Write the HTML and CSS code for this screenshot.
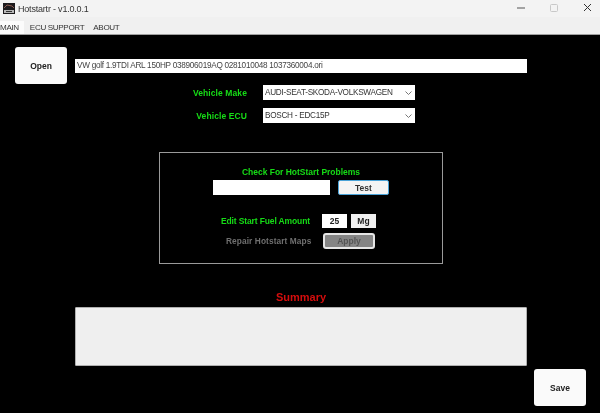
FILE: index.html
```html
<!DOCTYPE html>
<html lang="en">
<head>
<meta charset="utf-8">
<title>Hotstartr</title>
<link rel="stylesheet" href="styles.css">
</head>
<body>
<div class="window">
  <header class="titlebar">
    <svg class="app-icon" width="12" height="11" viewBox="0 0 12 11"><rect width="12" height="11" fill="#1c1a1c"/><path d="M1 5 L4 2 L9 3 L11 5" fill="none" stroke="#8a5a50" stroke-width="1"/><rect x="1" y="7" width="10" height="3" fill="#b8b8b8"/><rect x="3" y="8" width="6" height="1" fill="#333"/></svg>
    <span class="app-title">Hotstartr - v1.0.0.1</span>
    <div class="controls">
      <svg width="8" height="2" viewBox="0 0 8 2"><rect width="8" height="1" y="0.5" fill="#555"/></svg>
      <svg width="8" height="8" viewBox="0 0 8 8"><rect x="0.5" y="0.5" width="7" height="7" rx="1" fill="none" stroke="#c8c8c8"/></svg>
      <svg width="9" height="9" viewBox="0 0 9 9"><path d="M1 1 L8 8 M8 1 L1 8" stroke="#333" stroke-width="1" fill="none"/></svg>
    </div>
  </header>
  <nav class="tabs">
    <span class="tab tab-active">MAIN</span>
    <span class="tab">ECU SUPPORT</span>
    <span class="tab">ABOUT</span>
  </nav>
  <main class="content">
    <div class="file-row">
      <button class="big-btn">Open</button>
      <div class="field file-field">VW golf 1.9TDI ARL 150HP 038906019AQ 0281010048 1037360004.ori</div>
    </div>
    <div class="select-row row-make">
      <label class="green label-cell">Vehicle Make</label>
      <div class="field select">AUDI-SEAT-SKODA-VOLKSWAGEN<svg class="chev" width="7" height="4" viewBox="0 0 7 4"><path d="M0.5 0.5 L3.5 3.5 L6.5 0.5" fill="none" stroke="#777"/></svg></div>
    </div>
    <div class="select-row row-ecu">
      <label class="green label-cell">Vehicle ECU</label>
      <div class="field select">BOSCH - EDC15P<svg class="chev" width="7" height="4" viewBox="0 0 7 4"><path d="M0.5 0.5 L3.5 3.5 L6.5 0.5" fill="none" stroke="#777"/></svg></div>
    </div>
    <section class="panel">
      <div class="green check-title">Check For HotStart Problems</div>
      <div class="test-row">
        <div class="field test-field"></div>
        <button class="test-btn">Test</button>
      </div>
      <div class="fuel-row">
        <span class="green fuel-label">Edit Start Fuel Amount</span>
        <div class="field fuel-value">25</div>
        <div class="mg">Mg</div>
      </div>
      <div class="repair-row">
        <span class="repair-label">Repair Hotstart Maps</span>
        <button class="apply-btn">Apply</button>
      </div>
    </section>
    <div class="summary-title">Summary</div>
    <div class="summary-box"></div>
    <div class="save-row"><button class="big-btn">Save</button></div>
  </main>
</div>
</body>
</html>
```

FILE: styles.css
```css
* { box-sizing: border-box; }
html, body { margin: 0; padding: 0; background: #000; }
body { width: 600px; height: 413px; overflow: hidden; font-family: "Liberation Sans", Arial, sans-serif; }
.window { width: 600px; height: 413px; display: flex; flex-direction: column; filter: blur(0.35px); }

.titlebar { height: 17px; background: #f3f3f3; display: flex; align-items: center; padding-left: 3px; flex: none; }
.app-icon { margin-right: 3px; }
.app-title { font-size: 9px; letter-spacing: -0.2px; color: #333; }
.controls { margin-left: auto; display: flex; align-items: center; gap: 25px; padding-right: 8px; margin-top: -2px; }

.tabs { height: 17.5px; background: #f0f0f0; border-bottom: 1px solid #a0a0a0; display: flex; align-items: flex-end; font-size: 8.1px; letter-spacing: -0.35px; color: #333; flex: none; }
.tab { padding: 0 0 1px; margin-right: 9px; line-height: 11px; }
.tab-active { background: #fbfbfb; padding: 1px 5px 1px 0; margin-right: 6px; }

.content { flex: 1; background: #000; display: flex; flex-direction: column; }
.green { color: #16dc16; font-weight: bold; font-size: 8.5px; letter-spacing: 0.1px; }

.big-btn { width: 52px; height: 37px; background: #fafafa; border: 0; border-radius: 3px; font: bold 8.5px "Liberation Sans", Arial, sans-serif; color: #222; padding: 0; }
.field { background: #fff; font-size: 8.2px; letter-spacing: -0.27px; color: #333; }

.file-row { display: flex; align-items: center; gap: 8px; padding: 12.5px 0 0 15px; }
.file-field { width: 452px; height: 14px; line-height: 14px; padding-left: 2px; color: #444; }

.select-row { display: grid; grid-template-columns: 247px 152px; column-gap: 16px; align-items: center; }
.row-make { margin-top: 1px; }
.row-ecu { margin-top: 8px; }
.label-cell { text-align: right; }
.select { height: 15px; line-height: 15px; padding-left: 2px; position: relative; }
.chev { position: absolute; right: 3px; top: 6px; }

.panel { margin: 29px 0 0 159px; width: 284px; height: 112px; border: 1px solid #9a9a9a; display: flex; flex-direction: column; }
.check-title { text-align: center; margin-top: 14px; line-height: 10px; font-size: 8.5px; letter-spacing: -0.02px; }
.test-row { display: flex; gap: 8px; margin: 3px 0 0 53px; }
.test-field { width: 117px; height: 15px; }
.test-btn { width: 51px; height: 15px; background: #f4f4f4; border: 1px solid #4aa3d8; border-radius: 2px; font: bold 8.5px "Liberation Sans", Arial, sans-serif; color: #333; padding: 0; }
.fuel-row { display: flex; align-items: center; margin: 19px 0 0 61px; height: 14px; }
.green.fuel-label { width: 101px; font-size: 8.5px; letter-spacing: -0.13px; }
.field.fuel-value { width: 25px; height: 14px; line-height: 14px; text-align: center; font-weight: bold; font-size: 8.5px; letter-spacing: 0; color: #222; }
.mg { width: 25px; height: 14px; line-height: 14px; margin-left: 4px; text-align: center; background: #f0f0f0; font-size: 8.5px; font-weight: bold; color: #222; }
.repair-row { display: flex; align-items: center; margin: 5px 0 0 66px; height: 16px; }
.repair-label { width: 97px; color: #6f6f6f; font-size: 8.3px; font-weight: bold; letter-spacing: 0.1px; }
.apply-btn { width: 52px; height: 16px; background: #858585; border: 2px solid #e6e6e6; border-radius: 3px; font: bold 8.5px "Liberation Sans", Arial, sans-serif; color: #555; padding: 0; }

.summary-title { margin: 27px 0 0 276px; color: #d40d0d; font-weight: bold; font-size: 11px; line-height: 12px; }
.summary-box { margin: 4px 0 0 75px; width: 452px; height: 59px; background: #efefef; border: 1px solid #b0b0b0; border-radius: 1px; }
.save-row { display: flex; justify-content: flex-end; padding: 3px 14px 0 0; }
```
